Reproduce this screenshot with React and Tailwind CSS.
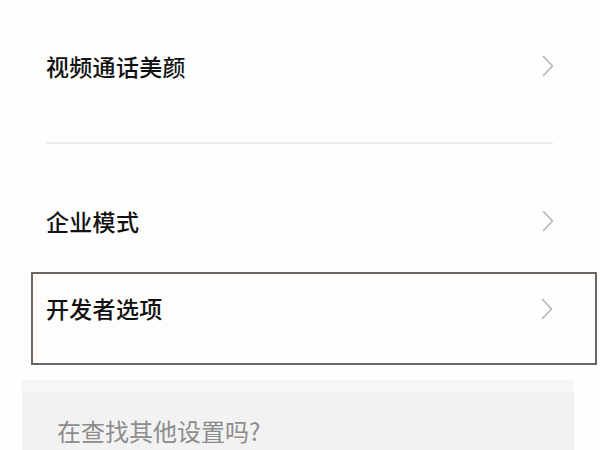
import React from "react";

const Chevron = () => (
  <svg width="12" height="22" viewBox="0 0 12 22" fill="none">
    <polyline
      points="1.5,1.5 10.5,11 1.5,20.5"
      stroke="#b5b5b5"
      strokeWidth="1.6"
      strokeLinecap="round"
      strokeLinejoin="round"
    />
  </svg>
);

const Row = ({ label, className }) => (
  <div className={"flex items-center justify-between " + className}>
    <span className="text-[23px] font-medium text-[#111] leading-none tracking-[0.3px]">{label}</span>
    <Chevron />
  </div>
);

export default function App() {
  return (
    <div
      className="w-[600px] h-[450px] overflow-hidden bg-[#fefefe]"
      style={{ fontFamily: '"Noto Sans CJK SC", "Noto Sans", sans-serif' }}
    >
      {/* ---------------- video beauty ---------------- */}
      <Row label="视频通话美颜" className="h-[132px] pl-[46px] pr-[46px]" />

      <div className="mt-[10px] ml-[46px] mr-[47px] h-[2px] bg-[#ececec]" />

      {/* ---------------- enterprise ---------------- */}
      <Row label="企业模式" className="mt-[47px] h-[60px] pl-[46px] pr-[46px]" />

      {/* ---------------- developer options (highlighted) ---------------- */}
      <div className="mt-[21px] ml-[31px] w-[566px] h-[93px] border-2 border-[#6b6562] bg-[#fffdfc]">
        <Row label="开发者选项" className="h-full pb-[20px] pl-[13px] pr-[42px]" />
      </div>

      {/* ---------------- search hint ---------------- */}
      <div className="mt-[15px] ml-[22px] w-[552px] h-[80px] bg-[#f2f2f2]">
        <div className="h-[12px] bg-[#f6f6f6]" />
        <div className="pl-[35px] pt-[27px] text-[24px] text-[#8c8c8c] leading-none">
          在查找其他设置吗?
        </div>
      </div>
    </div>
  );
}
